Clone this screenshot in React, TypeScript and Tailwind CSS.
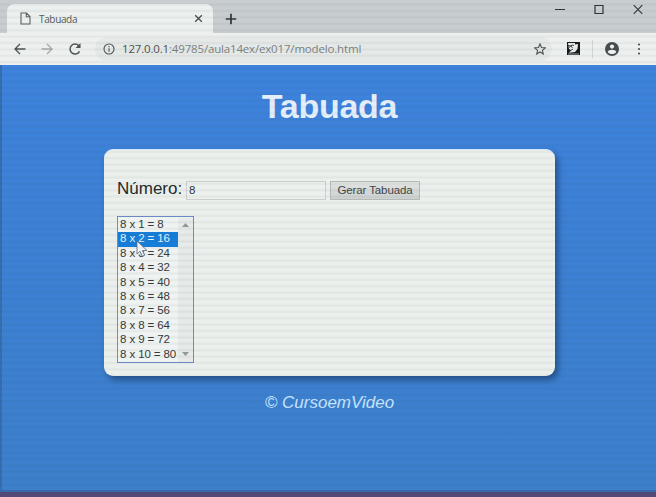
import React from "react";

const rows = Array.from({ length: 10 }, (_, i) => `8 x ${i + 1} = ${8 * (i + 1)}`);

function TitleBar() {
  return (
    <div className="flex h-[33px] bg-[#c8cdd0] pl-[7px]">
      <div className="mt-1 flex h-[29px] w-[206px] items-center rounded-t-[7px] bg-[#ecf0ee] pl-[13px] pr-[10px]">
        <svg width="11" height="13" viewBox="0 0 11 13" fill="none" stroke="#5d6263" strokeWidth="1.1">
          <path d="M1 1h5.500L10 4.500V12H1zM6.300 1v3.700H10" />
        </svg>
        <span className="ml-[8px] font-['Open_Sans','Noto_Sans',sans-serif] text-[10px] leading-none tracking-[-0.35px] text-[#555b5c]">Tabuada</span>
        <svg className="ml-auto" width="9" height="9" viewBox="0 0 9 9" stroke="#474c4d" strokeWidth="1.3">
          <path d="M1.200 1.200l6.600 6.600M7.800 1.200L1.200 7.800" />
        </svg>
      </div>
      <svg className="ml-[12px] mt-[13px]" width="12" height="12" viewBox="0 0 12 12" stroke="#303537" strokeWidth="1.7">
        <path d="M6 .8v10.400M.8 6h10.400" />
      </svg>
      <div className="ml-auto mr-[13px] mt-[4px] flex gap-[29px] text-[#303537]">
        <svg width="10" height="11" viewBox="0 0 10 11" stroke="currentColor"><path d="M0 5.500h10" /></svg>
        <svg width="10" height="11" viewBox="0 0 10 11" fill="none" stroke="currentColor" strokeWidth="1.2"><path d="M1 1.500h8v8H1z" /></svg>
        <svg width="10" height="11" viewBox="0 0 10 11" stroke="currentColor" strokeWidth="1.1"><path d="M.7 1.200l8.600 8.600M9.300 1.200L.7 9.800" /></svg>
      </div>
    </div>
  );
}

function AddressBar() {
  return (
    <div className="flex h-[32px] items-center bg-[#edf0ef] pb-px pl-[14px] pr-[15px] text-[#4e5354]">
      <svg width="12" height="12" viewBox="0 0 12 12" fill="none" stroke="currentColor" strokeWidth="1.3"><path d="M11.500 6H1.200M6 1L1 6l5 5" /></svg>
      <svg className="ml-[15px]" width="12" height="12" viewBox="0 0 12 12" fill="none" stroke="#a5aaaa" strokeWidth="1.3"><path d="M.5 6h10.300M6 1l5 5-5 5" /></svg>
      <svg className="ml-[15px]" width="14" height="14" viewBox="0 0 14 14" fill="none" stroke="currentColor" strokeWidth="1.500">
        <path d="M11.500 9.300A5 5 0 1 1 10.800 3.700L12 5" /><path d="M12.500 1v5h-5z" fill="currentColor" stroke="none" />
      </svg>
      <div className="ml-[13px] flex h-[24px] w-[457px] items-center rounded-full bg-[#e5e9e7] pl-[8px] pr-[6px]">
        <svg width="12" height="12" viewBox="0 0 12 12" fill="none" stroke="currentColor" strokeWidth="1.100"><circle cx="6" cy="6" r="5" /><path d="M6 5.200v3.500M6 3v1.200" /></svg>
        <span className="ml-[7px] w-[239px] whitespace-nowrap font-['Open_Sans','Noto_Sans',sans-serif] text-[11.5px] leading-none tracking-[-0.17px] text-[#7b8182]"><span className="text-[#4b5051]">127.0.0.1</span>:49785/aula14ex/ex017/modelo.html</span>
        <svg className="ml-auto" width="12" height="12" viewBox="0 0 24 24" fill="none" stroke="currentColor" strokeWidth="2.200"><path d="M12 2l3 7 7.500.7-5.700 5 1.700 7.300L12 18l-6.500 4 1.700-7.300-5.700-5L9 9z" /></svg>
      </div>
      <svg className="ml-[15px]" width="13" height="13" viewBox="0 0 13 13">
        <path d="M0 0h13v13H0z" fill="#151b1d" />
        <path d="M1 1h7v1.500l3-.5-.5 5-2.500 3-6 .7 2-2.500L2 7z" fill="#e9edec" />
        <path d="M1 3.500l3 .5 1.500 2M2 5.500L5 3l2 .5M3 9l3-2" fill="none" stroke="#151b1d" strokeWidth=".8" />
        <path d="M1 12h11" stroke="#d7dddd" strokeWidth=".7" />
      </svg>
      <div className="ml-[12px] h-[18px] w-px bg-[#d2d7d6]" />
      <svg className="ml-[12px]" width="14" height="14" viewBox="0 0 14 14"><circle cx="7" cy="7" r="7" fill="#474d4e" /><circle cx="7" cy="4.600" r="2.100" fill="#edf0ef" /><path d="M2.700 10c.6-3 8-3 8.600 0-2 2.700-6.600 2.700-8.600 0z" fill="#edf0ef" /></svg>
      <svg className="ml-auto" width="4" height="12" viewBox="0 0 4 12" fill="currentColor"><circle cx="2" cy="1.500" r="1.100" /><circle cx="2" cy="6" r="1.100" /><circle cx="2" cy="10.500" r="1.100" /></svg>
    </div>
  );
}

function Results() {
  return (
    <div className="relative mt-[16px] flex h-[147px] w-[77px] border border-[#6f8ccb] bg-[#eff3f1] pt-px text-[11.5px] tracking-[-0.1px] text-[#363a3b]">
      <div className="w-[60px]">
        {rows.map((row, i) => (
          <div key={row} className={i === 1 ? "h-[14.4px] whitespace-nowrap bg-[#167ed9] pl-[2px] leading-[13px] text-[#e7f4ff]" : "h-[14.4px] whitespace-nowrap pl-[2px] leading-[13px]"}>{row}</div>
        ))}
      </div>
      <div className="flex w-[15px] flex-col items-center justify-between bg-[#e6eae8] pb-[6px] pt-[5px]">
        <svg width="7" height="4" viewBox="0 0 7 4" fill="#929998"><path d="M0 4l3.500-4L7 4z" /></svg>
        <svg width="7" height="4" viewBox="0 0 7 4" fill="#929998"><path d="M0 0l3.500 4L7 0z" /></svg>
      </div>
      <svg className="absolute left-[18px] top-[23px]" width="12" height="18" viewBox="0 0 12 18" fill="#f2f6fa" stroke="#667381" strokeWidth=".9"><path d="M1 1v13l3-2.700 2.300 5 2.400-1.100-2.300-4.700H11z" /></svg>
    </div>
  );
}

export default function App() {
  return (
    <div className="relative flex h-[497px] w-[656px] flex-col overflow-hidden border-b-[5px] border-[#534976] bg-[#3c80d4] font-['Liberation_Sans',Arial,sans-serif]">
      <TitleBar />
      <AddressBar />
      <main className="flex h-[427px] flex-col items-center border-b-2 border-l-2 border-[#366dae] bg-linear-to-b from-[#3d82dc] to-[#3c7fcb] pl-px">
        <h1 className="mt-[21px] text-[34px] font-bold leading-[40px] tracking-[-0.25px] text-[#e4effa]">Tabuada</h1>
        <section className="mt-[23px] h-[227px] w-[451px] rounded-[9px] border-t border-[#d1e8ff] bg-[#ecf0ed] pl-[13px] pt-[31px] shadow-[3px_4px_6px_rgba(22,49,90,0.6)]">
          <div className="flex h-[19px] items-center">
            <label htmlFor="number" className="w-[69px] pb-[3px] text-[17px] leading-[18px] text-[#242a2b]">Número:</label>
            <input id="number" defaultValue="8" className="h-[19px] w-[140px] border border-[#cbd0cf] bg-[#edf1ee] px-[2px] pb-px text-[11.5px] text-[#333839] outline-none" />
            <button className="ml-[4px] h-[19px] w-[90px] whitespace-nowrap border border-[#b5bab9] bg-linear-to-b from-[#e2e5e4] to-[#cdd1d0] pb-px text-[11.5px] leading-[16px] tracking-[-0.1px] text-[#414647]">Gerar Tabuada</button>
          </div>
          <Results />
        </section>
        <footer className="mt-[17px] text-[17px] italic leading-[20px] text-[#c6e5ff]">© CursoemVideo</footer>
      </main>
      <div className="pointer-events-none absolute inset-0 bg-[repeating-linear-gradient(to_bottom,rgba(40,55,60,0)_0px,rgba(40,55,60,0)_2.4px,rgba(40,55,60,0.06)_4.8px,rgba(40,55,60,0)_6.4px)]" />
    </div>
  );
}
